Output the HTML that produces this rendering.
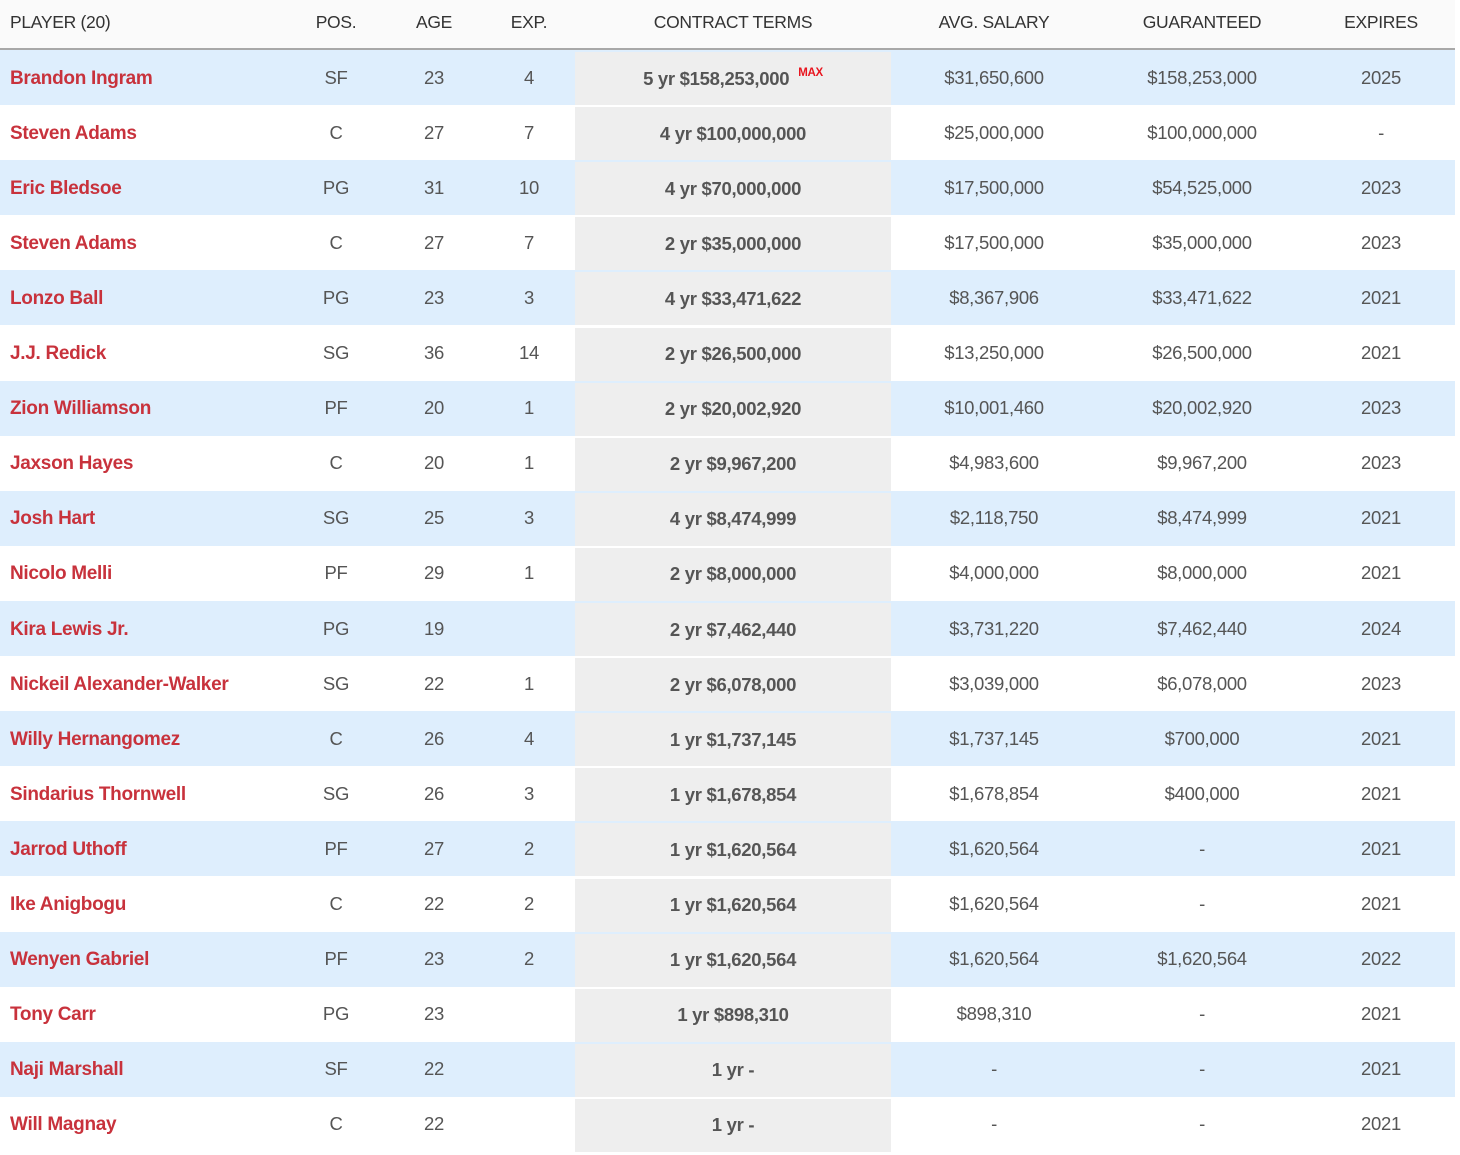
<!DOCTYPE html>
<html><head><meta charset="utf-8"><style>
*{margin:0;padding:0;box-sizing:border-box}
body{width:1460px;height:1155px;background:#fff;font-family:"Liberation Sans",Arial,sans-serif;position:relative;overflow:hidden}
.hd{position:absolute;left:0;top:0;width:1455px;height:50px;background:#fafafa;border-bottom:2px solid #a8a8a8}
.c{position:absolute;top:0;height:100%;display:flex;align-items:center;justify-content:center;color:#555;font-size:18.5px;letter-spacing:-0.3px;white-space:nowrap}
.hd .c{color:#333;font-size:17.5px;padding-bottom:4px}
.row{position:absolute;left:0;width:1455px;height:55.1px}
.b{background:#deeefd}
.n{left:10px;justify-content:flex-start;color:#c8323c;font-weight:bold;font-size:19px;letter-spacing:-0.3px;padding-top:2px}
.g{left:575px;width:316px;background:#eeeeee;top:2px;height:53.1px;font-weight:bold;color:#555}
.max{color:#e8141e;font-size:11.5px;font-weight:bold;position:relative;top:-6px;margin-left:9px}
</style></head><body>
<div class="hd">
<div class="c" style="left:10px;justify-content:flex-start">PLAYER (20)</div>
<div class="c" style="left:296px;width:80px">POS.</div>
<div class="c" style="left:394px;width:80px">AGE</div>
<div class="c" style="left:489px;width:80px">EXP.</div>
<div class="c" style="left:575px;width:316px">CONTRACT TERMS</div>
<div class="c" style="left:894px;width:200px">AVG. SALARY</div>
<div class="c" style="left:1102px;width:200px">GUARANTEED</div>
<div class="c" style="left:1301px;width:160px">EXPIRES</div>
</div>
<div id="rows"></div>
<script>
var d=[
["Brandon Ingram","SF","23","4","5 yr $158,253,000","$31,650,600","$158,253,000","2025",1],
["Steven Adams","C","27","7","4 yr $100,000,000","$25,000,000","$100,000,000","-"],
["Eric Bledsoe","PG","31","10","4 yr $70,000,000","$17,500,000","$54,525,000","2023"],
["Steven Adams","C","27","7","2 yr $35,000,000","$17,500,000","$35,000,000","2023"],
["Lonzo Ball","PG","23","3","4 yr $33,471,622","$8,367,906","$33,471,622","2021"],
["J.J. Redick","SG","36","14","2 yr $26,500,000","$13,250,000","$26,500,000","2021"],
["Zion Williamson","PF","20","1","2 yr $20,002,920","$10,001,460","$20,002,920","2023"],
["Jaxson Hayes","C","20","1","2 yr $9,967,200","$4,983,600","$9,967,200","2023"],
["Josh Hart","SG","25","3","4 yr $8,474,999","$2,118,750","$8,474,999","2021"],
["Nicolo Melli","PF","29","1","2 yr $8,000,000","$4,000,000","$8,000,000","2021"],
["Kira Lewis Jr.","PG","19","","2 yr $7,462,440","$3,731,220","$7,462,440","2024"],
["Nickeil Alexander-Walker","SG","22","1","2 yr $6,078,000","$3,039,000","$6,078,000","2023"],
["Willy Hernangomez","C","26","4","1 yr $1,737,145","$1,737,145","$700,000","2021"],
["Sindarius Thornwell","SG","26","3","1 yr $1,678,854","$1,678,854","$400,000","2021"],
["Jarrod Uthoff","PF","27","2","1 yr $1,620,564","$1,620,564","-","2021"],
["Ike Anigbogu","C","22","2","1 yr $1,620,564","$1,620,564","-","2021"],
["Wenyen Gabriel","PF","23","2","1 yr $1,620,564","$1,620,564","$1,620,564","2022"],
["Tony Carr","PG","23","","1 yr $898,310","$898,310","-","2021"],
["Naji Marshall","SF","22","","1 yr -","-","-","2021"],
["Will Magnay","C","22","","1 yr -","-","-","2021"]];
var h="";
d.forEach(function(r,i){
h+='<div class="row'+(i%2==0?' b':'')+'" style="top:'+(50+i*55.1)+'px">'+
'<div class="c n">'+r[0]+'</div>'+
'<div class="c" style="left:296px;width:80px">'+r[1]+'</div>'+
'<div class="c" style="left:394px;width:80px">'+r[2]+'</div>'+
'<div class="c" style="left:489px;width:80px">'+r[3]+'</div>'+
'<div class="c g">'+r[4]+(r[8]?'<span class="max">MAX</span>':'')+'</div>'+
'<div class="c" style="left:894px;width:200px">'+r[5]+'</div>'+
'<div class="c" style="left:1102px;width:200px">'+r[6]+'</div>'+
'<div class="c" style="left:1301px;width:160px">'+r[7]+'</div></div>';
});
document.getElementById("rows").innerHTML=h;
</script>
</body></html>
